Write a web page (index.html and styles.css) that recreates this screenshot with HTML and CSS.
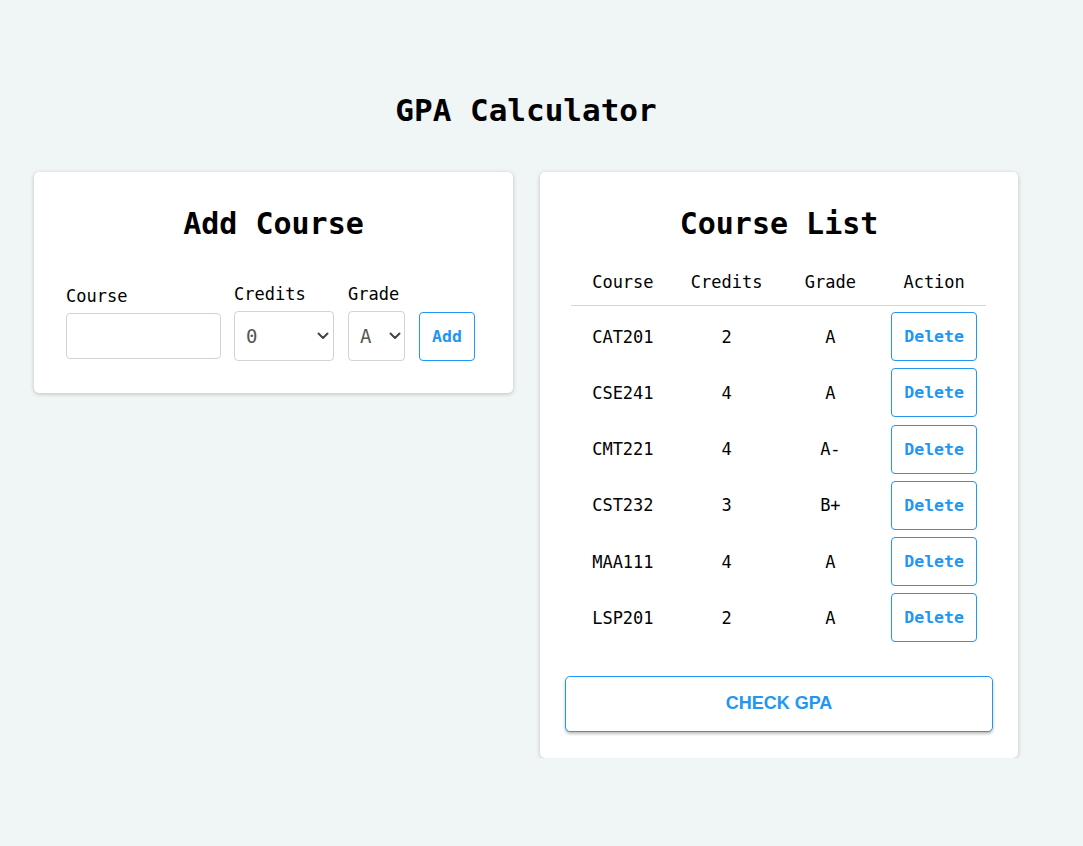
FILE: index.html
```html
<!DOCTYPE html>
<html lang="en">
<head>
<meta charset="utf-8">
<title>GPA Calculator</title>
<link rel="stylesheet" href="styles.css">
</head>
<body>
<div class="page">
  <h1 class="title">GPA Calculator</h1>
  <div class="cards">
    <section class="card card-add">
      <h2 class="card-title">Add Course</h2>
      <form class="add-form">
        <div class="field field-course">
          <label class="field-label" for="course">Course</label>
          <input class="text-input" id="course" type="text">
        </div>
        <div class="field">
          <label class="field-label" for="credits">Credits</label>
          <div class="select-wrap select-credits">
            <select class="select" id="credits"><option>0</option><option>1</option><option>2</option><option>3</option><option>4</option></select>
            <svg class="chevron" width="12" height="8" viewBox="0 0 12 8"><path d="M1.5 1.5 L6 6 L10.5 1.5" fill="none" stroke="#444" stroke-width="2" stroke-linecap="round" stroke-linejoin="round"/></svg>
          </div>
        </div>
        <div class="field">
          <label class="field-label" for="grade">Grade</label>
          <div class="select-wrap select-grade">
            <select class="select" id="grade"><option>A</option><option>A-</option><option>B+</option><option>B</option></select>
            <svg class="chevron" width="12" height="8" viewBox="0 0 12 8"><path d="M1.5 1.5 L6 6 L10.5 1.5" fill="none" stroke="#444" stroke-width="2" stroke-linecap="round" stroke-linejoin="round"/></svg>
          </div>
        </div>
        <button class="btn-outline btn-add" type="button">Add</button>
      </form>
    </section>

    <section class="card card-list">
      <h2 class="card-title">Course List</h2>
      <table class="course-table">
        <thead>
          <tr><th>Course</th><th>Credits</th><th>Grade</th><th>Action</th></tr>
        </thead>
        <tbody>
          <tr><td>CAT201</td><td>2</td><td>A</td><td><button class="btn-outline btn-delete" type="button">Delete</button></td></tr>
          <tr><td>CSE241</td><td>4</td><td>A</td><td><button class="btn-outline btn-delete" type="button">Delete</button></td></tr>
          <tr><td>CMT221</td><td>4</td><td>A-</td><td><button class="btn-outline btn-delete" type="button">Delete</button></td></tr>
          <tr><td>CST232</td><td>3</td><td>B+</td><td><button class="btn-outline btn-delete" type="button">Delete</button></td></tr>
          <tr><td>MAA111</td><td>4</td><td>A</td><td><button class="btn-outline btn-delete" type="button">Delete</button></td></tr>
          <tr><td>LSP201</td><td>2</td><td>A</td><td><button class="btn-outline btn-delete" type="button">Delete</button></td></tr>
        </tbody>
      </table>
      <button class="btn-check" type="button">Check GPA</button>
    </section>
  </div>
</div>
</body>
</html>
```

FILE: styles.css
```css
* { box-sizing: border-box; }

html, body {
  margin: 0;
  padding: 0;
}

body {
  background: #f0f5f5;
  font-family: "DejaVu Sans Mono", monospace;
  color: #000;
}

.page {
  width: 984px;
  margin-left: 34px;
  padding-top: 92px;
}

.title {
  margin: 0 0 44px;
  font-size: 31px;
  line-height: 36px;
  font-weight: bold;
  text-align: center;
}

.cards {
  display: flex;
  align-items: flex-start;
  gap: 27px;
}

.card {
  background: #fff;
  border-radius: 5px;
  box-shadow: 0 1px 4px rgba(0, 0, 0, 0.22);
}

.card-add {
  width: 479px;
  padding: 34px 32px 32px 32px;
}

.card-list {
  width: 478px;
  padding: 34px 25px 26px;
}

.card-title {
  margin: 0;
  font-size: 30px;
  line-height: 36px;
  font-weight: bold;
  text-align: center;
}

.add-form {
  display: flex;
  align-items: center;
  margin-top: 42px;
}

.field {
  display: flex;
  flex-direction: column;
  margin-right: 14px;
}

.field-course {
  margin-right: 13px;
}

.field-label {
  font-size: 17px;
  line-height: 20px;
  margin-bottom: 7px;
}

.text-input {
  width: 155px;
  height: 46px;
  border: 1px solid #ced4da;
  border-radius: 4px;
  font: inherit;
  padding: 0 10px;
  background: #fff;
}

.select-wrap {
  position: relative;
  height: 50px;
}

.select-credits { width: 100px; }
.select-grade { width: 57px; }

.select {
  appearance: none;
  -webkit-appearance: none;
  width: 100%;
  height: 50px;
  border: 1px solid #ced4da;
  border-radius: 4px;
  background: #fff;
  font-family: "DejaVu Sans Mono", monospace;
  font-size: 19px;
  color: #555;
  padding: 0 0 0 11px;
}

.chevron {
  position: absolute;
  right: 5px;
  top: 21px;
  pointer-events: none;
}

.select-grade .chevron { right: 4px; }

.btn-outline {
  background: #fff;
  border: 1px solid #2196f3;
  border-radius: 4px;
  color: #2196f3;
  font-family: "DejaVu Sans Mono", monospace;
  font-weight: bold;
  font-size: 16.5px;
  cursor: pointer;
  padding: 0;
}

.btn-add {
  width: 56px;
  height: 49px;
  align-self: flex-end;
}

.course-table {
  width: calc(100% - 13px);
  margin: 16px 6px 0;
  border-collapse: collapse;
  table-layout: fixed;
}

.course-table th {
  font-weight: normal;
  font-size: 17px;
  line-height: 20px;
  padding: 14px 0 13px;
  border-bottom: 1px solid #d4d4d4;
  text-align: center;
}

.course-table td {
  font-size: 17px;
  text-align: center;
  vertical-align: middle;
  padding: 6px 0 1.25px;
}

.btn-delete {
  width: 86px;
  height: 49px;
  display: block;
  margin: 0 auto;
}

.btn-check {
  display: block;
  width: 100%;
  height: 56px;
  margin-top: 32px;
  background: #fff;
  border: 1.5px solid #2196f3;
  border-radius: 5px;
  color: #2196f3;
  font-family: "Liberation Sans", Arial, sans-serif;
  font-weight: bold;
  font-size: 18px;
  text-transform: uppercase;
  box-shadow: 0 2px 3px rgba(0, 0, 0, 0.25);
  cursor: pointer;
}
```
